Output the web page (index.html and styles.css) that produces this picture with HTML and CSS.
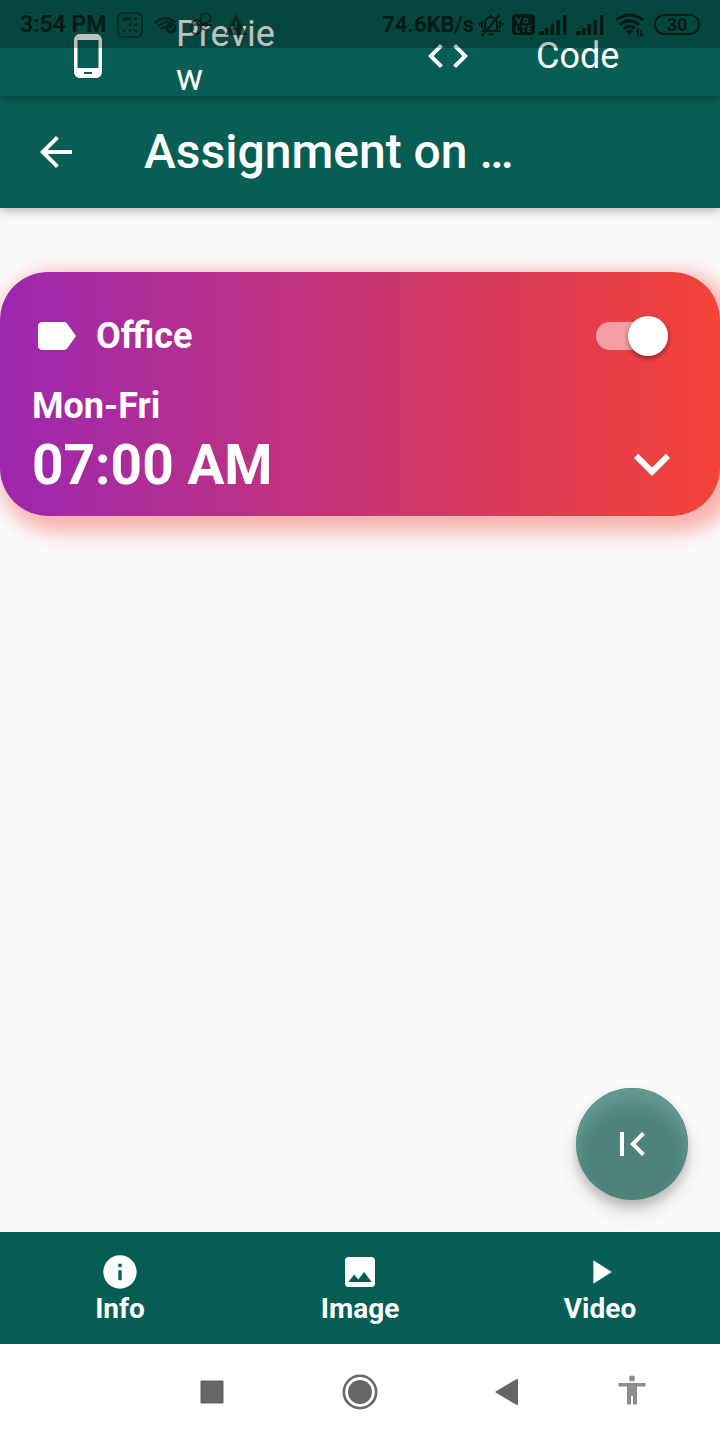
FILE: index.html
```html
<!DOCTYPE html>
<html lang="en">
<head>
<meta charset="utf-8">
<meta name="viewport" content="width=device-width, initial-scale=1">
<title>Assignment</title>
<link rel="stylesheet" href="styles.css">
</head>
<body>
<div class="status">
  <div class="status-group status-left">
    <span>3:54 PM</span>
    <svg width="26" height="26" viewBox="0 0 26 26" fill="none" stroke="currentColor" stroke-linecap="round"><rect x="1" y="1" width="24" height="24" rx="5" stroke-width="1.500"/><path d="M7 7h6M18.500 7h.1M13 13h.1M18.500 13h.1M7 18.500h.1M13 18.500h.1M18.500 18.500h.1" stroke-width="3.400"/></svg>
    <svg width="24" height="20" viewBox="0 0 24 20" fill="none" stroke="currentColor"><path d="M1 8Q11 -1 21 7M4 11.500Q11 5 17 8M7 14.500Q9 12 12 12" stroke-width="2.600"/><circle cx="17" cy="13" r="5.500" fill="currentColor" stroke="none"/><path d="M14.500 13l2 2 3.500-4" stroke="#07483f" stroke-width="1.500"/></svg>
    <svg width="24" height="24" viewBox="0 0 24 24" fill="none" stroke="currentColor" stroke-width="2"><path d="M12 12V7a5 5 0 1 1 5 3q-3 0-5 2M12 12h10a5 5 0 0 1-10 0M12 12v5a5 5 0 1 1-4-6M12 12H3a5 5 0 0 1 9-3"/></svg>
    <svg width="24" height="24" viewBox="0 0 24 24"><path fill="currentColor" d="M12 1L23 22H1z"/><path fill="#07483f" d="M10.800 8h2.400v7h-2.400zM10.800 17h2.400v2.500h-2.400z"/></svg>
  </div>
  <div class="status-group status-right">
    <span>74.6KB/s</span>
    <svg class="bell" width="26" height="24" viewBox="0 0 26 24" fill="none" stroke="currentColor" stroke-width="2"><path d="M5 18h16l-2-3V10a6 6 0 0 0-12 0v5zM13 4V1.500M4 23L22 1M4 8v7M22 8v7M1.500 10v3M24.500 10v3"/><path d="M10 20.500h6q-3 4-6 0" fill="currentColor" stroke="none"/></svg>
    <svg class="volte" width="23" height="21" viewBox="0 0 23 21"><rect width="23" height="21" rx="4" fill="currentColor"/><path fill="none" stroke="#07483f" stroke-width="1.500" d="M4 3l2.500 6L9 3M12 5h3.500v3.500H12zM4.500 11.500V18H8M9 12.200h5M11.500 12v6M19.500 12.200H16V17.500h3.500M16 15h3"/></svg>
    <svg class="bars" width="28" height="20" viewBox="0 0 28 20" fill="currentColor"><path d="M0 16h5v4H0zM6 13h3.500v7H6zM11.500 9H15v11h-3.500zM17.500 5H21v15h-3.500zM24 0h3.500v20H24z"/></svg>
    <svg class="bars" width="28" height="20" viewBox="0 0 28 20" fill="currentColor"><path d="M0 16h5v4H0zM6 13h3.500v7H6zM11.500 9H15v11h-3.500zM17.500 5H21v15h-3.500zM24 0h3.500v20H24z"/></svg>
    <svg class="wifi" width="29" height="24" viewBox="0 0 29 24" fill="none" stroke="currentColor" stroke-width="3"><path d="M1 7Q14.500 -3 28 7M5 11.500Q14.500 4 24 11.500M9 15.500Q14.500 11 20 15.500"/><path d="M11 18q3.500-2.500 7 0l-3.500 4z" fill="currentColor" stroke="none"/><path d="M23 23.500V17l-2 2.500M26 17v6.500l2-2.500" stroke-width="1.400"/></svg>
    <span class="battery">30</span>
  </div>
</div>

<nav class="tabs" aria-label="View">
  <button class="tab" type="button">
    <svg class="icon" viewBox="0 0 24 24"><path d="M16 1H8C6.340 1 5 2.340 5 4v16c0 1.660 1.340 3 3 3h8c1.660 0 3-1.340 3-3V4c0-1.660-1.340-3-3-3zm-2 20h-4v-1h4v1zm3.250-3H6.750V4h10.500v14z"/></svg>
    <span class="tab-text">Preview</span>
  </button>
  <button class="tab" type="button">
    <svg class="icon" viewBox="0 0 24 24"><path d="M9.400 16.600L4.800 12l4.600-4.600L8 6l-6 6 6 6 1.400-1.400zm5.200 0l4.600-4.600-4.600-4.600L16 6l6 6-6 6-1.400-1.400z"/></svg>
    <span class="tab-text">Code</span>
  </button>
</nav>

<header class="appbar">
  <button class="plain" type="button" aria-label="Back">
    <svg class="icon" viewBox="0 0 24 24"><path d="M20 11H7.830l5.590-5.590L12 4l-8 8 8 8 1.410-1.410L7.830 13H20v-2z"/></svg>
  </button>
  <h1 class="title">Assignment on …</h1>
</header>

<main class="content">
  <section class="card">
    <div class="card-row card-head">
      <svg class="icon" viewBox="0 0 24 24"><path d="M17.630 5.840C17.270 5.330 16.670 5 16 5L5 5.010C3.900 5.010 3 5.900 3 7v10c0 1.100.9 1.990 2 1.990L16 19c.67 0 1.270-.33 1.630-.84L22 12l-4.370-6.160z"/></svg>
      <label class="name" for="alarm">Office</label>
      <input class="switch" id="alarm" type="checkbox" role="switch" checked>
    </div>
    <div class="days">Mon-Fri</div>
    <div class="card-row">
      <div class="time">07:00 AM</div>
      <button class="plain" type="button" aria-label="Expand">
        <svg class="icon-large" viewBox="0 0 24 24"><path d="M7.410 8.590L12 13.170l4.590-4.580L18 10l-6 6-6-6 1.410-1.410z"/></svg>
      </button>
    </div>
  </section>
  <button class="fab" type="button" aria-label="First page">
    <svg class="icon" viewBox="0 0 24 24"><path d="M18.410 16.590L13.820 12l4.590-4.590L17 6l-6 6 6 6zM6 6h2v12H6z"/></svg>
  </button>
</main>

<nav class="bottom" aria-label="Sections">
  <button class="item" type="button">
    <svg class="icon-small" viewBox="0 0 24 24"><path d="M12 2C6.480 2 2 6.480 2 12s4.480 10 10 10 10-4.480 10-10S17.520 2 12 2zm1 15h-2v-6h2v6zm0-8h-2V7h2v2z"/></svg>
    Info
  </button>
  <button class="item" type="button">
    <svg class="icon-small" viewBox="0 0 24 24"><path d="M21 19V5c0-1.100-.9-2-2-2H5c-1.100 0-2 .9-2 2v14c0 1.100.9 2 2 2h14c1.100 0 2-.9 2-2zM8.500 13.500l2.500 3.010L14.500 12l4.500 6H5l3.500-4.500z"/></svg>
    Image
  </button>
  <button class="item" type="button">
    <svg class="icon-small" viewBox="0 0 24 24"><path d="M8 5v14l11-7z"/></svg>
    Video
  </button>
</nav>

<nav class="system" aria-label="System">
  <button class="plain" type="button" aria-label="Recents"><svg width="24" height="24" viewBox="0 0 24 24"><rect x="0.500" y="0.500" width="23" height="23" rx="1" fill="#666"/></svg></button>
  <button class="plain" type="button" aria-label="Home"><svg width="36" height="36" viewBox="0 0 36 36"><circle cx="18" cy="18" r="16.200" fill="none" stroke="#666" stroke-width="2.600"/><circle cx="18" cy="18" r="12" fill="#666"/></svg></button>
  <button class="plain" type="button" aria-label="Back"><svg width="24" height="26" viewBox="0 0 24 26"><path d="M22 1v24L1.500 13z" fill="#666" stroke="#666" stroke-width="2" stroke-linejoin="round"/></svg></button>
  <button class="plain person" type="button" aria-label="Accessibility"><svg width="28" height="30" viewBox="0 0 28 30" fill="#8c8c8c"><circle cx="14" cy="3.500" r="3"/><path d="M.5 8h27v3.500H19V29.500h-4V21h-2v8.500H9V11.500H.5z"/></svg></button>
</nav>
</body>
</html>
```
FILE: styles.css
```css
* {
  box-sizing: border-box;
}

body {
  position: relative;
  display: flex;
  flex-direction: column;
  min-height: 100vh;
  margin: 0;
  background: #fafafa;
  color: #fff;
  font-family: Roboto, sans-serif;
}

button {
  margin: 0;
  padding: 0;
  border: 0;
  background: none;
  color: inherit;
  font: inherit;
}

svg {
  display: block;
  flex: none;
}

.icon,
.icon-small,
.icon-large {
  width: 48px;
  height: 48px;
  fill: currentColor;
}

.icon-small {
  width: 40px;
  height: 40px;
}

.icon-large {
  width: 72px;
  height: 72px;
}

.plain {
  display: flex;
  align-items: center;
  justify-content: center;
}

/* Translucent system bar drawn over the tabs */
.status {
  position: absolute;
  z-index: 5;
  top: 0;
  left: 0;
  right: 0;
  display: flex;
  justify-content: space-between;
  height: 48px;
  padding: 1px 20px 0;
  background: rgba(0, 0, 0, 0.25);
  color: rgba(0, 20, 14, 0.9);
  font-size: 23px;
  font-weight: 600;
}

.status-group {
  display: flex;
  align-items: center;
}

.status-left {
  gap: 11px;
}

.status-left svg {
  opacity: 0.7;
}

.status-right {
  font-size: 22px;
  font-weight: 700;
}

.bell {
  margin-left: 4px;
}

.volte {
  margin-left: 8px;
}

.bars {
  margin-left: 4px;
}

.bars + .bars {
  margin-left: 9px;
}

.wifi {
  margin-left: 11px;
}

.battery {
  width: 46px;
  margin-left: 10px;
  border: 2px solid;
  border-radius: 10px;
  font-size: 18px;
  line-height: 17px;
  text-align: center;
}

.tabs {
  position: relative;
  z-index: 2;
  display: grid;
  grid-template-columns: 1fr 1fr;
  height: 96px;
  padding-top: 16px;
  background: #075e54;
  box-shadow: 0 2px 8px rgba(0, 0, 0, 0.3);
}

.tab {
  display: flex;
  align-items: center;
  gap: 64px;
  min-width: 0;
  height: 80px;
  padding: 0 64px;
  text-align: left;
}

.tab-text {
  min-width: 0;
  font-size: 36px;
  line-height: 44px;
  overflow-wrap: anywhere;
}

.appbar {
  position: relative;
  z-index: 1;
  display: flex;
  align-items: center;
  gap: 64px;
  height: 112px;
  padding: 0 32px;
  background: #075e54;
  box-shadow: 0 3px 10px rgba(0, 0, 0, 0.28);
}

.title {
  margin: 0;
  font-size: 48px;
  font-weight: 500;
  line-height: 56px;
}

.content {
  display: flex;
  flex: 1;
  flex-direction: column;
  justify-content: space-between;
  padding: 64px 0 32px;
  overflow: hidden;
}

.card {
  padding: 16px 32px;
  border-radius: 48px;
  background: linear-gradient(90deg, #9c27b0, #f44336);
  box-shadow: 8px 8px 20px 8px rgba(244, 67, 54, 0.4);
  font-weight: 700;
}

.card-row {
  display: flex;
  align-items: center;
  justify-content: space-between;
}

.card-head {
  gap: 16px;
  height: 96px;
}

.name {
  flex: 1;
  font-size: 36px;
}

.switch {
  position: relative;
  width: 72px;
  height: 28px;
  margin: 0 20px 0 0;
  border-radius: 14px;
  background: rgba(255, 255, 255, 0.5);
  appearance: none;
}

.switch::before {
  content: "";
  position: absolute;
  top: -6px;
  left: 0;
  width: 40px;
  height: 40px;
  border-radius: 50%;
  background: #fff;
  box-shadow: 0 2px 5px rgba(0, 0, 0, 0.45);
}

.switch:checked::before {
  left: 32px;
}

.days {
  font-size: 36px;
  line-height: 44px;
}

.time {
  padding-top: 2px;
  font-size: 55px;
  line-height: 66px;
}

.fab {
  display: flex;
  align-items: center;
  justify-content: center;
  align-self: flex-end;
  width: 112px;
  height: 112px;
  margin-right: 32px;
  border-radius: 50%;
  background: #4e837b;
  box-shadow:
    inset 0 14px 18px #669b92,
    0 6px 10px rgba(0, 0, 0, 0.16),
    0 12px 20px rgba(0, 0, 0, 0.14);
}

.bottom {
  display: grid;
  grid-template-columns: repeat(3, 1fr);
  height: 112px;
  background: #075e54;
}

.item {
  display: flex;
  flex-direction: column;
  align-items: center;
  padding-top: 20px;
  font-size: 28px;
  font-weight: 700;
  line-height: 33px;
}

.system {
  display: grid;
  grid-template-columns: 150fr 148fr 146fr 104fr;
  height: 96px;
  padding: 0 5% 0 19%;
  background: #fff;
}

.person {
  padding-bottom: 4px;
}
```
